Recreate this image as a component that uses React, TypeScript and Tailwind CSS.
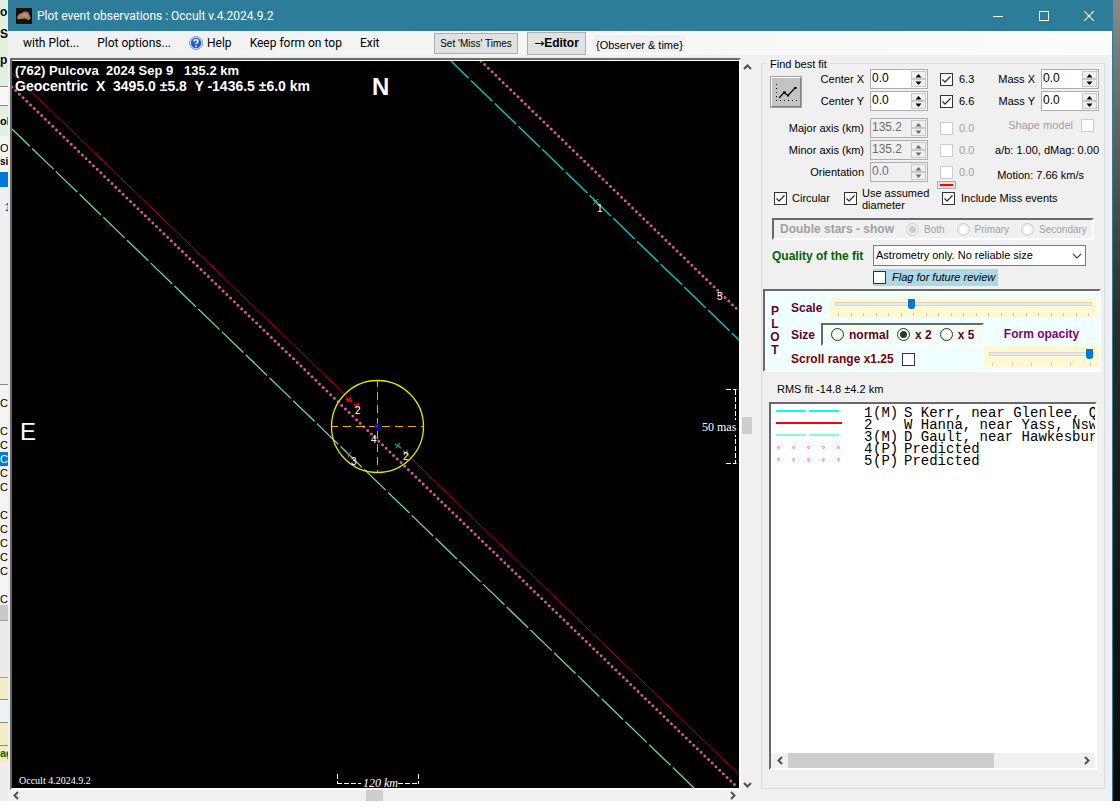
import { useState, type ReactNode } from 'react'

type Observer = {
  id: number
  flag: string
  name: string
  stroke: string
  kind: 'dashed' | 'solid' | 'dotted'
}

const observers: Observer[] = [
  { id: 1, flag: '(M)', name: 'S Kerr, near Glenlee, Q', stroke: '#00ffff', kind: 'dashed' },
  { id: 2, flag: '', name: 'W Hanna, near Yass, Nsw', stroke: '#ff0000', kind: 'solid' },
  { id: 3, flag: '(M)', name: 'D Gault, near Hawkesbur', stroke: '#7fffd4', kind: 'dashed' },
  { id: 4, flag: '(P)', name: 'Predicted', stroke: '#ff69b4', kind: 'dotted' },
  { id: 5, flag: '(P)', name: 'Predicted', stroke: '#ff69b4', kind: 'dotted' },
]

const sunken = 'border-2 border-t-[#696969] border-l-[#696969] border-r-white border-b-white'

function Check({
  id,
  checked = false,
  disabled = false,
}: {
  id: string
  checked?: boolean
  disabled?: boolean
}) {
  return (
    <span className="relative flex h-[13px] w-[13px] shrink-0">
      <input
        id={id}
        type="checkbox"
        defaultChecked={checked}
        disabled={disabled}
        className="peer h-[13px] w-[13px] appearance-none border border-[#333] bg-white disabled:border-[#ccc]"
      />
      <svg
        viewBox="0 0 13 13"
        className="pointer-events-none absolute inset-0 hidden h-[13px] w-[13px] peer-checked:block"
        aria-hidden
      >
        <path d="M2.500 6.500 5 9 10.500 3.500" fill="none" stroke="#333" strokeWidth="1.300" />
      </svg>
    </span>
  )
}

function Spin({ label, value, disabled = false }: { label: string; value: string; disabled?: boolean }) {
  const arrow = disabled ? '#6d6d6d' : '#000'
  return (
    <span
      className={[
        'flex h-5 w-[58px] shrink-0 border border-[#abadb3] p-px',
        disabled ? 'bg-[#f0f0f0]' : 'bg-white',
      ].join(' ')}
    >
      <input
        type="text"
        aria-label={label}
        defaultValue={value}
        disabled={disabled}
        className="h-[14px] w-[38px] min-w-0 flex-1 bg-transparent text-[12px] leading-[14px] text-black outline-none disabled:text-[#6d6d6d]"
      />
      <span className="flex w-[15px] flex-col">
        {['M1.500 4.500 4.500 1 7.500 4.500z', 'M1.500 0.500 4.500 4 7.500 0.500z'].map((d, i) => (
          <button
            key={d}
            type="button"
            disabled={disabled}
            aria-label={i === 0 ? `${label} up` : `${label} down`}
            className="flex h-2 w-full items-center justify-center border border-[#c8c8c8] bg-[#f0f0f0]"
          >
            <svg viewBox="0 0 9 5" className="h-[5px] w-[9px]" aria-hidden>
              <path d={d} fill={arrow} />
            </svg>
          </button>
        ))}
      </span>
    </span>
  )
}

function FitRow({
  label,
  value,
  error,
  enabled = false,
}: {
  label: string
  value: string
  error: string
  enabled?: boolean
}) {
  const id = `fit-${label.replace(/\W+/g, '-').toLowerCase()}`
  return (
    <div className="flex items-center">
      <span className="flex-1 pr-[6px] text-right">{label}</span>
      <Spin label={label} value={value} disabled={!enabled} />
      <span className="ml-3 flex w-[46px] items-center gap-[6px]">
        <Check id={id} checked={enabled} disabled={!enabled} />
        <label htmlFor={id} className={enabled ? '' : 'text-[#a0a0a0]'}>
          {error}
        </label>
      </span>
    </div>
  )
}

function Radio({
  name,
  label,
  checked = false,
  disabled = false,
}: {
  name: string
  label: string
  checked?: boolean
  disabled?: boolean
}) {
  return (
    <label className="flex items-center gap-[5px]">
      <input
        type="radio"
        name={name}
        defaultChecked={checked}
        disabled={disabled}
        className="h-[13px] w-[13px] shrink-0 appearance-none rounded-full border border-[#333] bg-white bg-clip-content p-[2px] checked:bg-[#333] disabled:border-[#ccc] checked:disabled:bg-[#ccc]"
      />
      {label}
    </label>
  )
}

function TrackBar({
  id,
  value,
  max,
  ticks,
  className,
}: {
  id: string
  value: number
  max: number
  ticks: number
  className: string
}) {
  const [pos, setPos] = useState(value)
  return (
    <div className={`flex min-w-0 flex-col bg-[#fff8d0] px-[5px] ${className}`}>
      <input
        id={id}
        type="range"
        min={0}
        max={max}
        value={pos}
        onChange={(e) => setPos(Number(e.target.value))}
        className="h-3 w-full min-w-0 appearance-none bg-transparent [&::-webkit-slider-runnable-track]:h-1 [&::-webkit-slider-runnable-track]:border [&::-webkit-slider-runnable-track]:border-[#d6d6d6] [&::-webkit-slider-runnable-track]:bg-[#e7eaea] [&::-webkit-slider-thumb]:-mt-1 [&::-webkit-slider-thumb]:h-[10px] [&::-webkit-slider-thumb]:w-[7px] [&::-webkit-slider-thumb]:appearance-none [&::-webkit-slider-thumb]:rounded-b-[3px] [&::-webkit-slider-thumb]:bg-[#0078d7]"
      />
      <div className="mt-[3px] flex h-[3px] justify-between px-[3px]" aria-hidden>
        {Array.from({ length: ticks }, (_, i) => (
          <span key={i} className="w-px bg-[#c4c4c4]" />
        ))}
      </div>
    </div>
  )
}

function Chevron({ dir }: { dir: 'up' | 'down' | 'left' | 'right' }) {
  const paths = {
    up: 'M1 6 4.500 2.500 8 6',
    down: 'M1 3 4.500 6.500 8 3',
    left: 'M6 1 2.500 4.500 6 8',
    right: 'M3 1 6.500 4.500 3 8',
  }
  return (
    <svg viewBox="0 0 9 9" className="h-[9px] w-[9px]" aria-hidden>
      <path d={paths[dir]} fill="none" stroke="#505050" strokeWidth="2" />
    </svg>
  )
}

function ScrollButton({ dir, label }: { dir: 'up' | 'down' | 'left' | 'right'; label: string }) {
  return (
    <button type="button" aria-label={label} className="flex h-3 w-3 shrink-0 items-center justify-center">
      <Chevron dir={dir} />
    </button>
  )
}

function Cross({ x, y, color }: { x: number; y: number; color: string }) {
  return (
    <path
      d={`M${x - 3} ${y - 2}l6 4M${x + 2} ${y - 3}l-4 5`}
      stroke={color}
      strokeWidth="1.600"
      fill="none"
    />
  )
}

function SkyPlot() {
  const dash = { strokeDasharray: '29.7 3.3', strokeDashoffset: 5, fill: 'none' }
  const dots = {
    stroke: '#d8589a',
    strokeWidth: 3,
    strokeLinecap: 'round' as const,
    strokeDasharray: '0 5.150',
  }
  return (
    <svg
      viewBox="12 61 727 727"
      preserveAspectRatio="xMinYMin slice"
      className="absolute inset-0 h-full w-full bg-black font-['Liberation_Sans',Arial,sans-serif]"
      role="img"
      aria-label="Occultation chords for (762) Pulcova"
    >
      {/* chords */}
      <path d="M12 73 347 396.500M407 454.500 739 774.500" stroke="#c40000" fill="none" />
      <path d="M347 396.500 359 408M396 444 408 455.500" stroke="#900000" strokeDasharray="3 2" fill="none" />
      <path d="M451 61 739 340" stroke="#00c8c8" strokeWidth="1.400" {...dash} />
      <path d="M12 129 694 788" stroke="#62d6b2" strokeWidth="1.300" {...dash} />
      <path d="M481 61 739 311" {...dots} />
      <path d="M12 87 738 788" {...dots} />

      {/* fitted circle */}
      <g stroke="#ffa500" strokeDasharray="8 5" strokeDashoffset="2">
        <path d="M332 426.500H424" />
        <path d="M377.500 381V473" />
      </g>
      <circle cx="377.500" cy="426.500" r="46" fill="none" stroke="#e6e600" strokeWidth="1.300" />
      <circle cx="377.500" cy="426.500" r="2" fill="none" stroke="#0000ff" strokeWidth="1.800" />
      <Cross x={349} y={400} color="#ff0000" />
      <Cross x={357} y={406} color="#ff0000" />
      <Cross x={398} y={446} color="#228b22" />
      <Cross x={406} y={453} color="#228b22" />
      <path d="M347 453l5 4M351 452l-3 5M593 200l5 5M598 199l-5 6" stroke="#6f8f96" fill="none" />

      {/* chord numbers */}
      <g fill="#fff" fontSize="10">
        <text x="597" y="212">1</text>
        <text x="355" y="414">2</text>
        <text x="403" y="460">2</text>
        <text x="351" y="465">3</text>
        <text x="371" y="443">4</text>
        <text x="717" y="300">5</text>
      </g>

      {/* titles and compass */}
      <g fill="#fff" fontWeight="bold">
        <text x="15" y="75" fontSize="13" className="whitespace-pre">
          {'(762) Pulcova  2024 Sep 9   135.2 km'}
        </text>
        <text x="15" y="91" fontSize="14" className="whitespace-pre">
          {'Geocentric  X  3495.0 ±5.8  Y -1436.5 ±6.0 km'}
        </text>
        <text x="372" y="95" fontSize="24">
          N
        </text>
      </g>
      <text x="20" y="440" fill="#fff" fontSize="24">
        E
      </text>

      {/* scale bars */}
      <path
        d="M726 389.500H736.500M735.500 390V464M726 463.500H736.500M337.500 774V784M418.500 774V784M337 783.500H361M398 783.500H418"
        stroke="#fff"
        fill="none"
        strokeDasharray="5 2"
      />
      <rect x="700" y="420" width="38" height="15" fill="#000" />
      <g fill="#fff" className="font-['Liberation_Serif',serif]">
        <text x="702" y="431" fontSize="12">50 mas</text>
        <text x="363" y="787" fontSize="12" fontStyle="italic">120 km</text>
        <text x="19" y="784" fontSize="10">Occult 4.2024.9.2</text>
      </g>
    </svg>
  )
}

function Swatch({ stroke, kind }: { stroke: string; kind: Observer['kind'] }) {
  return (
    <svg viewBox="0 0 66 12" className="h-3 w-[66px] shrink-0" aria-hidden>
      {kind === 'dashed' ? <path d="M0 4H30M33 4H63" stroke={stroke} strokeWidth="2" /> : null}
      {kind === 'solid' ? <path d="M0 4H66" stroke={stroke} strokeWidth="2" /> : null}
      {kind === 'dotted'
        ? [2, 17, 32, 47, 62].map((x) => (
            <circle key={x} cx={x + 0.5} cy="4.500" r="1" fill="none" stroke={stroke} strokeWidth="1" />
          ))
        : null}
    </svg>
  )
}

function BackgroundEdge() {
  return (
    <div
      className="flex w-2 shrink-0 flex-col overflow-hidden whitespace-nowrap bg-[#efefef] text-[11px] leading-[14px] text-black"
      aria-hidden
    >
      <div className="h-[86px] bg-[#e2f0e0] pt-[5px] text-[12px] font-bold">
        <p>o</p>
        <p className="mt-2">S</p>
        <p className="mt-3">p</p>
      </div>
      <div className="h-5 border-y border-[#8a8a8a] bg-[#f6f6f6]" />
      <div className="h-[30px] bg-[#e2f0e0] pt-2 font-bold">ol</div>
      <div className="h-[36px] bg-[#f4f4f4] pt-[5px]">
        <p>O</p>
        <p className="text-[10px] font-bold">si</p>
      </div>
      <div className="h-[15px] bg-[#0078d7]" />
      <div className="h-[198px] border-b border-[#888] bg-[#efefef] pl-[5px] pt-[13px] font-bold text-[#1c4e9c]">1</div>
      <div className="h-[220px] bg-[#f4f4f4] pt-[11px]">
        <p>C</p>
        <p className="mt-[14px]">C</p>
        <p>C</p>
        <p className="bg-[#0078d7] text-white">C</p>
        <p>C</p>
        <p>C</p>
        <p className="mt-[14px]">C</p>
        <p>C</p>
        <p>C</p>
        <p>C</p>
        <p>C</p>
        <p className="mt-[14px]">C</p>
      </div>
      <div className="h-[15px] bg-[#c8c8c8]" />
      <div className="h-[58px] border-y border-[#a0a0a0] bg-[#eaeaea]" />
      <div className="h-[22px] border-b border-[#888] bg-[#f3edc6]" />
      <div className="h-[22px] bg-[#eef0f2]" />
      <div className="h-[24px] border-y border-[#888] bg-[#f3edc6]" />
      <div className="h-[17px] bg-[#f3edc6] font-bold text-[#006400]">ag</div>
      <div className="flex-1 bg-[#ededed]" />
    </div>
  )
}

function TitleBar() {
  return (
    <header className="flex h-[31px] items-center bg-[#2d7c99] text-white">
      <span className="ml-2 flex h-4 w-4 items-center justify-center bg-[#14110e]">
        <svg viewBox="0 0 16 16" className="h-4 w-4" aria-hidden>
          <path d="M1 9 3 6 6 5 8 3.500 12 4 14 8 14.500 11 12 12 9 10.500 5 11 2 11.500z" fill="#a5805c" />
          <path d="M4 8 8 5.500 11 6 12 9 8 8.500z" fill="#bd9870" />
        </svg>
      </span>
      <h1 className="ml-[5px] flex-1 font-[Roboto,sans-serif] text-[12px]">
        Plot event observations : Occult v.4.2024.9.2
      </h1>
      <div className="flex">
        <button type="button" aria-label="Minimize" className="flex h-[31px] w-[46px] items-center justify-center">
          <svg viewBox="0 0 10 10" className="h-[10px] w-[10px]" aria-hidden>
            <path d="M0 5.500H10" stroke="#fff" />
          </svg>
        </button>
        <button type="button" aria-label="Maximize" className="flex h-[31px] w-[45px] items-center justify-center">
          <svg viewBox="0 0 10 10" className="h-[10px] w-[10px]" aria-hidden>
            <rect x="0.500" y="0.500" width="9" height="9" fill="none" stroke="#fff" />
          </svg>
        </button>
        <button type="button" aria-label="Close" className="flex h-[31px] w-[46px] items-center justify-center">
          <svg viewBox="0 0 10 10" className="h-[10px] w-[10px]" aria-hidden>
            <path d="M0 0 10 10M10 0 0 10" stroke="#fff" strokeWidth="1.200" />
          </svg>
        </button>
      </div>
    </header>
  )
}

function MenuItem({ children }: { children: ReactNode }) {
  return (
    <button type="button" className="flex items-center gap-1 whitespace-nowrap">
      {children}
    </button>
  )
}

function MenuBar() {
  return (
    <nav className="flex h-6 items-center bg-linear-to-r from-[#f0f0f0] to-[#fcfcfc]">
      <div className="ml-[15px] flex w-[411px] items-center gap-[18px] font-[Roboto,sans-serif] text-[12px]">
        <MenuItem>with Plot...</MenuItem>
        <MenuItem>Plot options...</MenuItem>
        <MenuItem>
          <svg viewBox="0 0 14 14" className="h-[14px] w-[14px]" aria-hidden>
            <circle cx="7" cy="7" r="6.500" fill="#dfe9fb" stroke="#7d97cf" />
            <circle cx="7" cy="7" r="5.200" fill="#2559d6" />
            <path
              d="M5 5.500C5 3.200 9 3.200 9 5.500 9 6.900 7 6.800 7 8.300M7 9.500V11"
              fill="none"
              stroke="#fff"
              strokeWidth="1.500"
            />
          </svg>
          Help
        </MenuItem>
        <MenuItem>Keep form on top</MenuItem>
        <MenuItem>Exit</MenuItem>
      </div>
      <button
        type="button"
        className="h-[21px] w-[84px] shrink-0 whitespace-nowrap border border-[#adadad] bg-[#e1e1e1] text-[10px]"
      >
        Set 'Miss' Times
      </button>
      <button
        type="button"
        className="ml-[9px] h-[23px] w-[59px] shrink-0 whitespace-nowrap border border-[#adadad] bg-[#e1e1e1] text-[12px] font-bold leading-[14px]"
      >
        <span className="font-['DejaVu_Sans',sans-serif] font-normal">→</span>Editor
      </button>
      <span className="ml-2 whitespace-nowrap bg-[#f0f0f0] px-[2px] pt-[3px] leading-[14px]">
        {'{Observer & time}'}
      </span>
    </nav>
  )
}

function PlotPanel() {
  return (
    <div className="flex min-w-0 flex-1 flex-col pl-[2px]">
      <div className="flex flex-1">
        <div className="flex flex-1 border-2 border-b-white border-l-[#696969] border-r-white border-t-[#696969]">
          <div className="relative flex-1 overflow-hidden border-t border-white">
            <SkyPlot />
          </div>
        </div>
        <div className="flex w-3 flex-col items-center bg-[#f0f0f0] pt-[3px]">
          <ScrollButton dir="up" label="Scroll up" />
          <div className="flex flex-1 flex-col">
            <div className="flex-[339]" />
            <div className="h-[17px] w-[10px] bg-[#cdcdcd]" />
            <div className="flex-[340]" />
          </div>
          <ScrollButton dir="down" label="Scroll down" />
        </div>
      </div>
      <div className="mr-[15px] flex h-[11px] items-center bg-[#f0f0f0]">
        <ScrollButton dir="left" label="Scroll left" />
        <div className="flex flex-1">
          <div className="flex-[345]" />
          <div className="h-[11px] w-[17px] bg-[#cdcdcd]" />
          <div className="flex-[344]" />
        </div>
        <ScrollButton dir="right" label="Scroll right" />
      </div>
    </div>
  )
}

function FitControls() {
  return (
    <>
      <div className="flex pl-2 pr-[5px]">
        <button
          type="button"
          aria-label="Plot fit"
          className="mt-[7px] h-8 w-8 shrink-0 border-2 border-b-[#808080] border-l-white border-r-[#808080] border-t-white bg-[#c3c3c3] outline-1 -outline-offset-1 outline-[#a0a0a0]"
        >
          <svg viewBox="0 0 28 28" className="h-7 w-7" aria-hidden>
            <path d="M4.500 6V23" stroke="#000" strokeDasharray="1 3" />
            <path d="M4 22.500H25" stroke="#000" strokeDasharray="1 3" />
            <path d="M7 20 12 14.500 16 17.500 23 10" fill="none" stroke="#000" strokeWidth="1.200" />
            <path d="M11 13.500h3v2h-3zM15 16.500h2v2h-2zM22 9h2.500v2H22z" fill="#000" />
          </svg>
        </button>
        <div className="flex w-[184px] flex-col gap-[2px]">
          <FitRow label="Center X" value="0.0" error="6.3" enabled />
          <FitRow label="Center Y" value="0.0" error="6.6" enabled />
        </div>
        <div className="flex flex-1 flex-col gap-[2px]">
          {['Mass X', 'Mass Y'].map((label) => (
            <div key={label} className="flex items-center justify-end gap-[6px] whitespace-nowrap">
              <span>{label}</span>
              <Spin label={label} value="0.0" />
            </div>
          ))}
        </div>
      </div>

      <div className="mt-[7px] flex pl-2 pr-[5px]">
        <div className="flex w-[216px] flex-col gap-[2px]">
          <FitRow label="Major axis (km)" value="135.2" error="0.0" />
          <FitRow label="Minor axis (km)" value="135.2" error="0.0" />
          <FitRow label="Orientation" value="0.0" error="0.0" />
        </div>
        <div className="flex flex-1 flex-col items-end gap-[11px] whitespace-nowrap leading-[14px]">
          <span className="flex items-center gap-2 pr-[5px] text-[#a0a0a0]">
            <label htmlFor="shape-model">Shape model</label>
            <Check id="shape-model" disabled />
          </span>
          <span>a/b: 1.00, dMag: 0.00</span>
          <span className="pr-[15px]">Motion: 7.66 km/s</span>
        </div>
      </div>

      <div className="flex h-[30px] items-center pl-3">
        <span className="flex w-[70px] items-center gap-[5px] pt-[3px]">
          <Check id="circular" checked />
          <label htmlFor="circular">Circular</label>
        </span>
        <span className="flex w-[93px] items-center gap-[5px] pt-[3px] leading-3">
          <Check id="assumed" checked />
          <label htmlFor="assumed" className="whitespace-nowrap">
            Use assumed
            <br />
            diameter
          </label>
        </span>
        <div className="-mt-[2px] flex h-full flex-col gap-[3px]">
          <button
            type="button"
            aria-label="Miss event line colour"
            className="flex h-2 w-[19px] items-center justify-center border border-[#adadad] bg-[#e1e1e1]"
          >
            <span className="h-[2px] w-[13px] bg-[#ff0000]" />
          </button>
          <span className="flex items-center gap-[6px] pl-[5px] leading-[13px]">
            <Check id="include-miss" checked />
            <label htmlFor="include-miss">Include Miss events</label>
          </span>
        </div>
      </div>

      <div
        className={`ml-[10px] mr-[10px] mt-[6px] flex h-[22px] items-center gap-3 whitespace-nowrap pl-[6px] text-[10px] text-[#a0a0a0] ${sunken}`}
      >
        <span className="text-[12px] font-bold">Double stars - show</span>
        <Radio name="double-stars" label="Both" checked disabled />
        <Radio name="double-stars" label="Primary" disabled />
        <Radio name="double-stars" label="Secondary" disabled />
      </div>

      <div className="mt-[5px] flex items-center pl-[10px] pr-[18px]">
        <label htmlFor="quality" className="w-[101px] whitespace-nowrap text-[12px] font-bold text-[#006400]">
          Quality of the fit
        </label>
        <span className="relative flex flex-1">
          <select
            id="quality"
            className="h-[21px] w-full appearance-none border border-[#7a7a7a] bg-white pl-[2px] text-[11px] text-black"
          >
            <option>Astrometry only. No reliable size</option>
          </select>
          <svg viewBox="0 0 10 6" className="pointer-events-none absolute right-1 top-2 h-[6px] w-[10px]" aria-hidden>
            <path d="M1 1 5 5 9 1" fill="none" stroke="#444" strokeWidth="1.200" />
          </svg>
        </span>
      </div>
      <div className="ml-[111px] mt-[3px] flex h-[17px] w-[125px] items-center gap-[6px] bg-[#add8e6] italic">
        <Check id="flag-review" />
        <label htmlFor="flag-review" className="whitespace-nowrap">
          Flag for future review
        </label>
      </div>
    </>
  )
}

function PlotControls() {
  return (
    <div
      className={`ml-px mr-[3px] mt-[3px] flex h-[83px] bg-[#f0ffff] text-[12px] font-bold text-[#800000] ${sunken}`}
    >
      <div className="flex w-[26px] shrink-0 flex-col items-center pr-[6px] pt-[14px] leading-[13px] text-[#660033]">
        <span>P</span>
        <span>L</span>
        <span>O</span>
        <span>T</span>
      </div>
      <div className="flex min-w-0 flex-1 flex-col">
        <div className="flex pt-[7px]">
          <label htmlFor="scale" className="w-[39px] pt-px text-[#660033]">
            Scale
          </label>
          <TrackBar id="scale" value={29} max={100} ticks={21} className="mr-[2px] h-[19px] flex-1" />
        </div>
        <div className="flex flex-1">
          <div className="flex shrink-0 flex-col">
            <div className="mt-[6px] flex items-center">
              <span className="w-[30px] text-[#660033]">Size</span>
              <div
                className={`flex h-[23px] w-[163px] items-center gap-2 whitespace-nowrap bg-[#f0fff0] pl-2 text-[#660033] ${sunken}`}
              >
                <Radio name="size" label="normal" />
                <Radio name="size" label="x 2" checked />
                <Radio name="size" label="x 5" />
              </div>
            </div>
            <div className="mt-[6px] flex items-center gap-2 leading-[14px]">
              <label htmlFor="scroll-range" className="whitespace-nowrap">
                Scroll range x1.25
              </label>
              <Check id="scroll-range" />
            </div>
          </div>
          <div className="flex min-w-0 flex-1 flex-col items-center">
            <label htmlFor="opacity" className="mt-[10px] h-[19px] whitespace-nowrap leading-[15px] text-[#800080]">
              Form opacity
            </label>
            <TrackBar id="opacity" value={100} max={100} ticks={6} className="h-[21px] w-full pt-[2px]" />
          </div>
        </div>
      </div>
    </div>
  )
}

function ObserverList() {
  return (
    <div className={`mx-[7px] mb-[18px] mt-[6px] flex flex-1 flex-col bg-white ${sunken}`}>
      <ul className="flex-1 overflow-hidden pl-[5px] pt-[3px] font-['Liberation_Mono',monospace] text-[14px] leading-3">
        {observers.map((o) => (
          <li key={o.id} className="flex h-3 whitespace-pre">
            <Swatch stroke={o.stroke} kind={o.kind} />
            <span className="ml-[22px] w-[9px] shrink-0">{o.id}</span>
            <span className="w-[31px] shrink-0">{o.flag}</span>
            <span className="shrink-0">{o.name}</span>
          </li>
        ))}
      </ul>
      <div className="flex h-[15px] items-center bg-[#f0f0f0] px-[3px]">
        <ScrollButton dir="left" label="Scroll list left" />
        <div className="flex flex-1 px-[2px]">
          <div className="h-[15px] w-[71%] bg-[#cdcdcd]" />
        </div>
        <ScrollButton dir="right" label="Scroll list right" />
      </div>
    </div>
  )
}

export default function App() {
  return (
    <div className="flex h-screen min-h-[700px] w-full bg-white pb-[9px] font-['Liberation_Sans',Arial,sans-serif] text-[11px] text-black">
      <BackgroundEdge />
      <div className="flex min-w-0 flex-1 flex-col border-r border-[#2d7c99] bg-[#f0f0f0]">
        <TitleBar />
        <MenuBar />
        <main className="flex flex-1 pt-[3px]">
          <PlotPanel />
          <fieldset className="mb-3 ml-2 mr-[7px] flex w-[344px] min-w-0 shrink-0 flex-col border border-[#dcdcdc]">
            <legend className="ml-[5px] h-[11px] px-[3px] leading-[13px]">Find best fit</legend>
            <FitControls />
            <PlotControls />
            <p className="mt-[10px] pl-[15px] leading-[14px]">RMS fit -14.8 ±4.2 km</p>
            <ObserverList />
          </fieldset>
        </main>
      </div>
      <div className="w-[7px] shrink-0 bg-linear-to-b from-[#8a8a8a] via-[#2c2c2c] via-40% to-[#0a0a0a]" aria-hidden />
    </div>
  )
}
